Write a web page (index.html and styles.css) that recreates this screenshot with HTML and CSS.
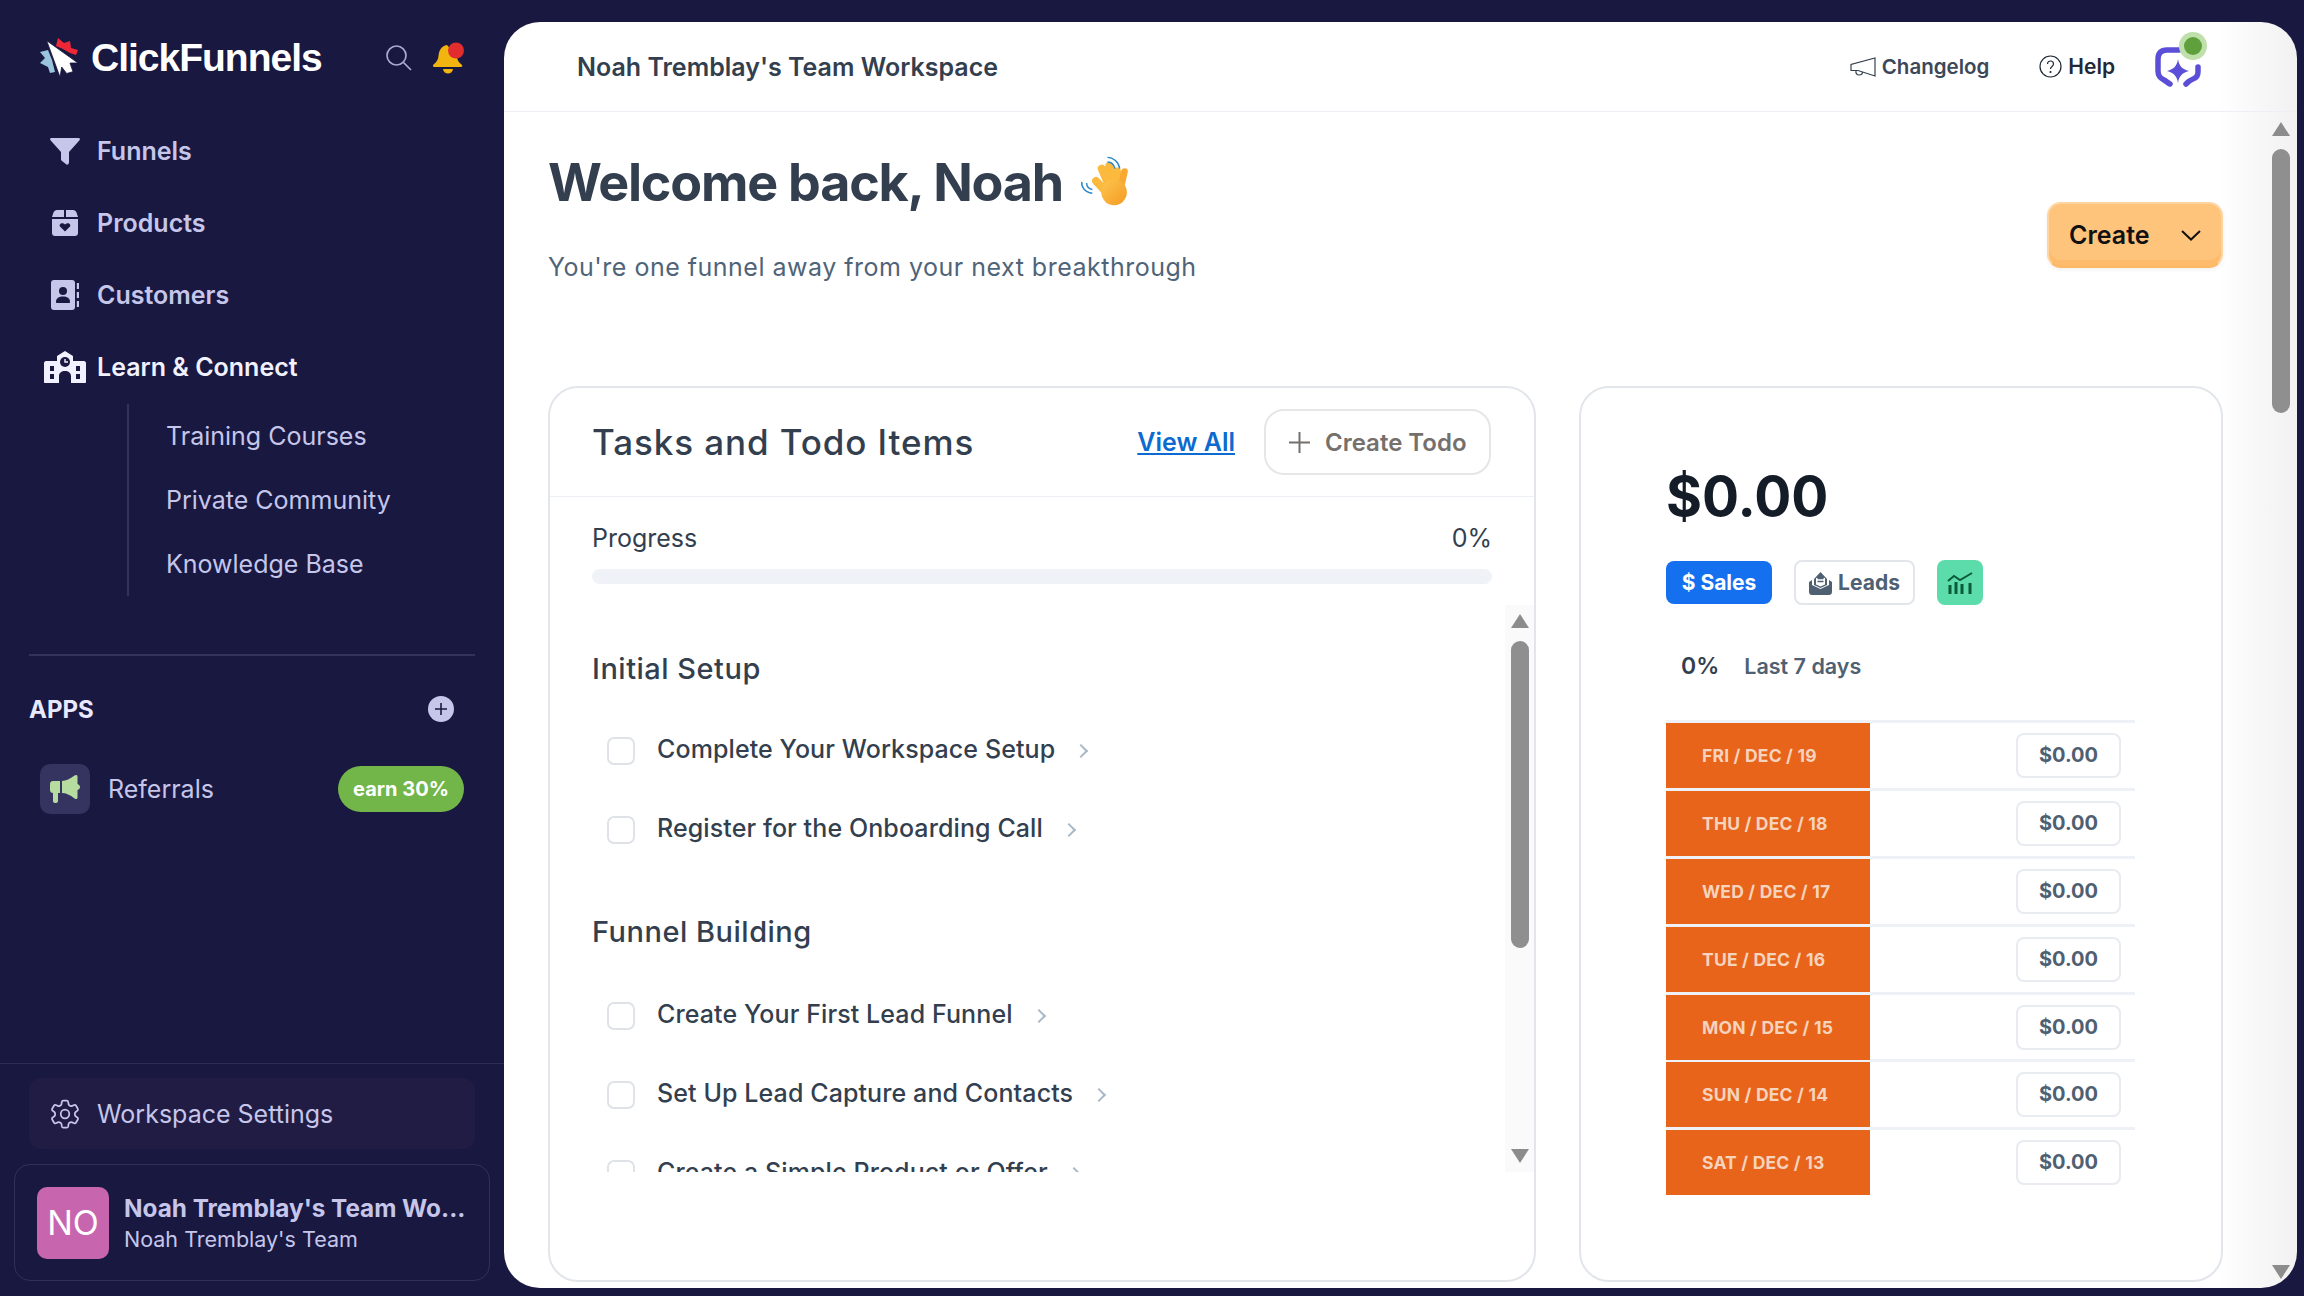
FILE: index.html
```html
<!DOCTYPE html>
<html>
<head>
	<meta charset="utf-8">
	<title>ClickFunnels</title>
	<link rel="stylesheet" href="styles.css">
</head>
<body>
	<div class="app">
		<aside class="sidebar">
			<div class="brand">
				<svg class="logo" viewBox="0 0 38 40">
					<path fill="#ee2737" d="M16 8 18 0 24 5 30 3 31 10 38 12 36 17 30 15 23 11Z"/>
					<path fill="#9cc3de" d="M0 14 8 12 12 22 15 34 10 35 8 29 0 25 5 20Z"/>
					<path fill="#fff" stroke="#191840" stroke-width=".8" d="M6.7 2.7 38 25 30 25 33 33.7 26.7 35.5 21.7 29 20 39Z"/>
				</svg>
				<span class="brand-name">ClickFunnels</span>
				<svg class="search-icon" viewBox="0 0 26 26" fill="none" stroke="#a9aad6" stroke-width="1.7"><circle cx="10.5" cy="10.5" r="9.5"/><path d="M17.5 17.5 25 25"/></svg>
				<svg class="bell-icon" viewBox="0 0 33 32">
					<path fill="#f2b50f" d="M15 3c-6 1-8 6-8.500 11-.4 4-2 6-5 8.500-1 1-.7 2.500 1 2.500h26c2 0 2.400-1.500 1-2.500-3-2.500-4-4-4.500-8Z"/>
					<path fill="#f2b50f" d="M11 27h10c-.5 3-2.500 4.500-5 4.500s-4.500-1.500-5-4.500Z"/>
					<circle cx="24" cy="8.500" r="8" fill="#e12d2d"/>
				</svg>
			</div>
			<nav class="nav">
				<a class="nav-item">
					<span class="nav-icon"><svg width="30" height="27" viewBox="0 0 30 27"><path fill="#c5c6ea" d="M1.500 0h27c1.200 0 1.800 1.200 1 2.200L19 14v10.500c0 1.500-1.500 2.800-2.500 2L12 23c-.8-.6-1-1.200-1-2v-7L.5 2.200C-.3 1.200.3 0 1.500 0Z"/></svg></span>
					Funnels
				</a>
				<a class="nav-item">
					<span class="nav-icon"><svg width="26" height="26" viewBox="0 0 26 26"><path fill="#c5c6ea" d="M5 0h7v7H0l1.500-4.500C2 1 3.500 0 5 0Zm9 0h7c1.500 0 3 1 3.500 2.500L26 7H14ZM0 9h26v14c0 1.700-1.300 3-3 3H3c-1.700 0-3-1.300-3-3Z"/><path fill="#191840" d="M13 21.500 8.200 16.800c-2-2.300 1.800-5.200 4.800-2.300 3-2.900 6.800 0 4.800 2.300Z"/></svg></span>
					Products
				</a>
				<a class="nav-item">
					<span class="nav-icon"><svg width="28" height="30" viewBox="0 0 28 30"><rect width="24" height="30" rx="3" fill="#c5c6ea"/><circle cx="12" cy="11" r="4" fill="#191840"/><path fill="#191840" d="M5 22c0-4 3-5.500 7-5.500s7 1.500 7 5.500c0 .7-.4 1-1 1H6c-.6 0-1-.3-1-1Z"/><path stroke="#c5c6ea" stroke-width="2.400" d="M27 3v6m0 3v6m0 3v6"/></svg></span>
					Customers
				</a>
				<a class="nav-item active">
					<span class="nav-icon"><svg width="42" height="32" viewBox="0 0 42 32"><path fill="#f1f1ff" d="M21 0 29 5v5h11c1 0 2 1 2 2v19c0 .6-.4 1-1 1H27v-7c0-3-2.500-5-6-5s-6 2-6 5v7H1c-.6 0-1-.4-1-1V12c0-1 1-2 2-2h11V5Z"/><circle cx="21" cy="11" r="5" fill="#191840"/><path stroke="#f1f1ff" stroke-width="1.400" fill="none" d="M21 8v3h3"/><path fill="#191840" d="M6 15h4v5H6zm0 8h4v5H6zm26-8h4v5h-4zm0 8h4v5h-4z"/></svg></span>
					Learn &amp; Connect
				</a>
			</nav>
			<ul class="subnav">
				<li>Training Courses</li>
				<li>Private Community</li>
				<li>Knowledge Base</li>
			</ul>
			<div class="divider"></div>
			<div class="apps-head">
				<span>APPS</span>
				<span class="apps-add"><svg width="12" height="12" viewBox="0 0 12 12"><path stroke="#191840" stroke-width="1.600" d="M6 0v12M0 6h12"/></svg></span>
			</div>
			<div class="referral">
				<span class="referral-icon"><svg width="30" height="28" viewBox="0 0 30 28"><path fill="#b7dca0" d="M26 0c1 0 1.500.7 1.500 1.500V9c1.500.5 2.500 1.500 2.500 3s-1 2.500-2.500 3v7.500c0 .8-.5 1.500-1.500 1.500-.5 0-1-.2-1.500-.6C20 20 16 18 12 18V6c4 0 8-2 12.500-5.400.5-.4 1-.6 1.500-.6ZM3 6h7v12H8v8c0 1-1 2-2 2H5c-1 0-2-1-2-2v-8c-1.700 0-3-1.300-3-3V9c0-1.700 1.300-3 3-3Z"/></svg></span>
				<span class="referral-name">Referrals</span>
				<span class="earn">earn 30%</span>
			</div>
			<div class="side-foot">
				<div class="settings">
					<span class="nav-icon"><svg width="32" height="32" viewBox="0 0 24 24" fill="none" stroke="#c5c6ea" stroke-width="1.300" stroke-linejoin="round"><path d="M9.600 2.900c.1-.5.500-.9 1.100-.9h2.600c.6 0 1 .4 1.100.9l.2 1.600c.1.500.4.900.8 1.100l.6.300c.4.200.9.200 1.400 0l1.500-.6c.5-.2 1.100 0 1.400.5l1.300 2.300c.3.500.2 1.100-.3 1.400l-1.300 1c-.4.300-.6.800-.6 1.300v.6c0 .5.200 1 .6 1.300l1.300 1c.5.300.6.900.3 1.400l-1.300 2.300c-.3.500-.9.700-1.400.5l-1.500-.6c-.5-.2-1-.2-1.400 0l-.6.300c-.4.200-.7.600-.8 1.100l-.2 1.600c-.1.500-.5.900-1.100.9h-2.600c-.6 0-1-.4-1.100-.9l-.2-1.600c-.1-.5-.4-.9-.8-1.100l-.6-.3c-.4-.2-.9-.2-1.400 0l-1.500.6c-.5.200-1.100 0-1.400-.5l-1.300-2.300c-.3-.5-.2-1.100.3-1.400l1.300-1c.4-.3.6-.8.600-1.300v-.6c0-.5-.2-1-.6-1.300l-1.300-1c-.5-.3-.6-.9-.3-1.400l1.300-2.300c.3-.5.900-.7 1.400-.5l1.500.6c.5.200 1 .2 1.400 0l.6-.3c.4-.2.700-.6.800-1.100Z"/><circle cx="12" cy="12" r="3.200"/></svg></span>
					Workspace Settings
				</div>
				<div class="account">
					<span class="avatar">NO</span>
					<div class="account-text">
						<div class="account-name">Noah Tremblay's Team Wo...</div>
						<div class="account-team">Noah Tremblay's Team</div>
					</div>
				</div>
			</div>
		</aside>

		<main class="panel">
			<header class="topbar">
				<span class="workspace">Noah Tremblay's Team Workspace</span>
				<div class="top-actions">
					<a class="top-link changelog">
						<svg width="26" height="20" viewBox="0 0 26 20" fill="none" stroke="#34404f" stroke-width="1.200"><path d="M25 1v18L8 13.500H1V7.500L25 1Z"/><path d="M6 13.500c-.5 3 1 4.500 3 4.500s3.500-1 3.500-3"/></svg>
						Changelog
					</a>
					<a class="top-link help">
						<svg width="23" height="23" viewBox="0 0 23 23" fill="none" stroke="#1f2937" stroke-width="1.200"><circle cx="11.500" cy="11.500" r="10.500"/><path d="M8.500 9c0-4 6-4 6 0 0 2.500-3 2.500-3 5"/><circle cx="11.500" cy="17" r=".5"/></svg>
						Help
					</a>
					<span class="ai-badge">
						<svg width="46" height="40" viewBox="0 0 46 40"><path fill="none" stroke="#5a4fd6" stroke-width="5.500" stroke-linecap="round" d="M24 3H12C6 3 3 6 3 12v12c0 5 2 7 6 9 2 1 4 3 6 4M43 20v5c0 4-2 6-5 7-3 1-5 3-7 5"/><path fill="#5a4fd6" d="M23 12c1 7 4 10 11 12-7 2-10 5-11 12-1-7-4-10-11-12 7-2 10-5 11-12Z"/></svg>
						<i class="ai-dot"></i>
					</span>
				</div>
			</header>
			<div class="page">
				<div class="page-content">
					<section class="hero">
						<div>
							<h1 class="welcome">Welcome back, Noah
								<svg class="wave" width="53" height="50" viewBox="0 0 56 52">
									<defs><linearGradient id="handFill" x1="0" y1="0" x2="1" y2="1"><stop offset="0" stop-color="#fcc64f"/><stop offset="1" stop-color="#f59a23"/></linearGradient></defs>
									<g fill="none" stroke-linecap="round">
										<path stroke="#fbb93e" stroke-width="8.500" d="M17 26 28 38M23 13 32 34M31 10 37 32M39 16 40 32"/>
										<path stroke="#f9a832" stroke-width="7" d="M47 16 43 34"/>
									</g>
									<circle cx="36" cy="38" r="13.500" fill="url(#handFill)"/>
									<path fill="none" stroke="#2c89c9" stroke-width="1.500" d="M2 27c-1 5 3 11 11 12M7 28c0 3 2 6 6 7M29 1c6 0 12 5 13 12M29 6c4 0 7 3 8 7"/>
								</svg>
							</h1>
							<p class="tagline">You're one funnel away from your next breakthrough</p>
						</div>
						<button class="create-btn">Create
							<svg width="20" height="11" viewBox="0 0 20 11" fill="none" stroke="#111" stroke-width="2"><path d="M1 1l9 8.500L19 1"/></svg>
						</button>
					</section>
					<section class="cards">
						<div class="card tasks">
							<div class="tasks-head">
								<h2>Tasks and Todo Items</h2>
								<a class="view-all">View All</a>
								<button class="create-todo"><svg width="21" height="21" viewBox="0 0 21 21"><path stroke="#75706c" stroke-width="2" d="M10.500 0v21M0 10.500h21"/></svg>Create Todo</button>
							</div>
							<div class="progress">
								<div class="progress-label"><span>Progress</span><span>0%</span></div>
								<div class="progress-bar"></div>
							</div>
							<div class="task-area">
								<div class="task-list">
									<h3>Initial Setup</h3>
									<div class="task"><i class="check"></i><span>Complete Your Workspace Setup</span><b class="chev"></b></div>
									<div class="task"><i class="check"></i><span>Register for the Onboarding Call</span><b class="chev"></b></div>
									<h3 class="later">Funnel Building</h3>
									<div class="task"><i class="check"></i><span>Create Your First Lead Funnel</span><b class="chev"></b></div>
									<div class="task"><i class="check"></i><span>Set Up Lead Capture and Contacts</span><b class="chev"></b></div>
									<div class="task"><i class="check"></i><span>Create a Simple Product or Offer</span><b class="chev"></b></div>
								</div>
								<div class="scroll scroll-tasks">
									<i class="scroll-up"></i>
									<i class="thumb thumb-tasks"></i>
									<i class="scroll-down"></i>
								</div>
							</div>
						</div>
						<div class="card sales">
							<div class="amount">$0.00</div>
							<div class="tabs">
								<span class="tab tab-sales">$ Sales</span>
								<span class="tab tab-leads"><svg width="23" height="24" viewBox="0 0 23 24"><path fill="#4f6072" d="M5 8 11.500 1 18 8v6l-6.500 3L5 14Z"/><path fill="#fff" d="M7 7h9v6.500l-4.500 2-4.500-2Z"/><path stroke="#4f6072" stroke-width="1.500" d="M8.500 7.500h6m-6 3h6"/><path fill="#4f6072" d="M0 11 3 9v5l8.500 4L20 14V9l3 2v10c0 1.700-1.300 3-3 3H3c-1.700 0-3-1.300-3-3Z"/></svg>Leads</span>
								<span class="tab-chart"><svg width="26" height="22" viewBox="0 0 26 22" fill="none" stroke="#0b5a3a"><path stroke-width="2" d="M1 9l6-5 6 4L25 1"/><path stroke-width="3" d="M3 13v9m6-12v12m6-10v12m8-13v13"/></svg></span>
							</div>
							<div class="stat"><span class="stat-pct">0%</span><span class="stat-range">Last 7 days</span></div>
							<div class="days">
								<div class="day"><span class="day-name">FRI / DEC / 19</span><span class="day-value">$0.00</span></div>
								<div class="day"><span class="day-name">THU / DEC / 18</span><span class="day-value">$0.00</span></div>
								<div class="day"><span class="day-name">WED / DEC / 17</span><span class="day-value">$0.00</span></div>
								<div class="day"><span class="day-name">TUE / DEC / 16</span><span class="day-value">$0.00</span></div>
								<div class="day"><span class="day-name">MON / DEC / 15</span><span class="day-value">$0.00</span></div>
								<div class="day"><span class="day-name">SUN / DEC / 14</span><span class="day-value">$0.00</span></div>
								<div class="day"><span class="day-name">SAT / DEC / 13</span><span class="day-value">$0.00</span></div>
							</div>
						</div>
					</section>
				</div>
				<div class="scroll scroll-page">
					<i class="scroll-up"></i>
					<i class="thumb thumb-page"></i>
					<i class="scroll-down"></i>
				</div>
			</div>
		</main>
	</div>
</body>
</html>
```

FILE: styles.css
```css
/* base */
* {
	box-sizing: border-box;
}

html, body {
	margin: 0;
	height: 100%;
	overflow: hidden;
}

body {
	background-color: #191840;
	font-family: Inter, "Open Sans", sans-serif;
	color: #1f2937;
}

.app {
	display: flex;
	height: 1296px;
}

h1, h2, h3, p, ul {
	margin: 0;
	padding: 0;
}

/* sidebar */
.sidebar {
	width: 504px;
	flex: none;
	display: flex;
	flex-direction: column;
	color: #c5c6ea;
}

.brand {
	display: flex;
	align-items: center;
	height: 40px;
	margin-top: 38px;
	padding: 0 39px 0 40px;
}

.logo {
	width: 38px;
	height: 40px;
}

.brand-name {
	margin-left: 13px;
	font-family: "Liberation Sans", sans-serif;
	font-size: 39px;
	font-weight: 700;
	letter-spacing: -1px;
	color: #fff;
}

.search-icon {
	width: 26px;
	height: 26px;
	margin-left: auto;
}

.bell-icon {
	width: 33px;
	height: 32px;
	margin-left: 20px;
}

.nav {
	margin-top: 37px;
}

.nav-item {
	display: flex;
	align-items: center;
	height: 72px;
	padding-left: 40px;
	font-size: 25px;
	font-weight: 600;
}

.nav-item.active {
	color: #f1f1ff;
}

.nav-icon {
	width: 50px;
	margin-right: 7px;
	display: flex;
	justify-content: center;
	flex: none;
}

.subnav {
	list-style: none;
	margin: 1px 0 0 127px;
	border-left: 2px solid #32325a;
	padding-left: 37px;
	font-size: 25px;
}

.subnav li {
	height: 64px;
	line-height: 64px;
}

.divider {
	height: 2px;
	margin: 58px 29px 0;
	background-color: #32325a;
}

.apps-head {
	display: flex;
	justify-content: space-between;
	align-items: center;
	height: 30px;
	margin-top: 38px;
	padding: 0 50px 0 29px;
	font-size: 24px;
	font-weight: 700;
	color: #e8e8ff;
}

.apps-add {
	width: 26px;
	height: 26px;
	border-radius: 50%;
	background-color: #c5c6ea;
	display: flex;
	align-items: center;
	justify-content: center;
}

.referral {
	display: flex;
	align-items: center;
	margin: 40px 40px 0;
	font-size: 25px;
}

.referral-icon {
	width: 50px;
	height: 50px;
	border-radius: 10px;
	background-color: #35335f;
	display: flex;
	align-items: center;
	justify-content: center;
}

.referral-name {
	margin-left: 18px;
}

.earn {
	margin-left: auto;
	width: 126px;
	height: 46px;
	line-height: 46px;
	text-align: center;
	border-radius: 23px;
	background-color: #72b548;
	color: #fff;
	font-size: 20px;
	font-weight: 700;
}

.side-foot {
	margin-top: auto;
	border-top: 1px solid #2e2d58;
	padding: 14px 14px 15px;
}

.settings {
	display: flex;
	align-items: center;
	height: 71px;
	margin: 0 15px;
	padding-left: 11px;
	border-radius: 12px;
	background-color: #201c44;
	font-size: 25px;
}

.account {
	display: flex;
	align-items: center;
	height: 117px;
	margin-top: 15px;
	padding: 0 10px 0 22px;
	border: 1px solid #30305a;
	border-radius: 16px;
}

.avatar {
	width: 72px;
	height: 72px;
	flex: none;
	border-radius: 10px;
	background-color: #c765ae;
	color: #fff;
	font-size: 34px;
	line-height: 72px;
	text-align: center;
}

.account-text {
	min-width: 0;
	margin-left: 15px;
}

.account-name {
	font-size: 24.300px;
	font-weight: 700;
	white-space: nowrap;
}

.account-team {
	margin-top: 3px;
	font-size: 21.500px;
}

/* panel */
.panel {
	flex: 1;
	height: 1266px;
	margin: 22px 7px 8px 0;
	border-radius: 36px;
	overflow: hidden;
	display: flex;
	flex-direction: column;
	background: linear-gradient(90deg, #fff calc(100% - 80px), #f1f1f1);
}

.topbar {
	display: flex;
	align-items: center;
	justify-content: space-between;
	flex: none;
	height: 90px;
	padding: 0 96px 0 73px;
	border-bottom: 1px solid #eceff3;
}

.workspace {
	font-size: 25px;
	font-weight: 600;
	color: #333f4f;
}

.top-actions {
	display: flex;
	align-items: center;
}

.top-link {
	display: flex;
	align-items: center;
	gap: 6px;
	font-size: 21px;
	font-weight: 600;
}

.changelog {
	color: #3c4858;
	font-size: 20.500px;
}

.help {
	margin-left: 50px;
}

.ai-badge {
	position: relative;
	margin-left: 40px;
	width: 46px;
	height: 40px;
}

.ai-dot {
	position: absolute;
	left: 29px;
	top: -10px;
	width: 18px;
	height: 18px;
	border-radius: 50%;
	background-color: #5f9f3c;
	box-shadow: 0 0 0 5px #bfe0ab;
}

.page {
	flex: 1;
	min-height: 0;
	display: flex;
}

.page-content {
	width: 1719px;
	flex: none;
	padding-left: 44px;
}

.hero {
	display: flex;
	justify-content: space-between;
	height: 274px;
}

.welcome {
	display: flex;
	align-items: center;
	height: 64px;
	margin-top: 38px;
	font-size: 52px;
	font-weight: 700;
	letter-spacing: -1.200px;
	color: #333f4f;
}

.wave {
	margin-left: 17px;
	margin-top: -2px;
}

.tagline {
	margin-top: 38px;
	font-size: 25px;
	letter-spacing: 0.500px;
	line-height: 30px;
	color: #4f6478;
}

.create-btn {
	display: flex;
	align-items: center;
	justify-content: space-between;
	width: 176px;
	height: 66px;
	margin-top: 90px;
	padding: 0 20px;
	font: 600 25px Inter, sans-serif;
	color: #111;
	background-color: #fec47c;
	border: 2px solid #ffd4a0;
	border-bottom-color: #fdb863;
	border-radius: 14px;
	box-shadow: inset 0 -6px 0 #fdbb6b, 0 2px 4px rgba(0,0,0,0.05);
}

.cards {
	display: flex;
	gap: 43px;
	height: 896px;
}

.card {
	border: 2px solid #e2e6ea;
	border-radius: 30px;
	background-color: #fff;
}

/* tasks */
.tasks {
	width: 988px;
	display: flex;
	flex-direction: column;
	overflow: hidden;
}

.tasks-head {
	display: flex;
	align-items: center;
	flex: none;
	height: 109px;
	padding: 0 43px 0 42px;
	border-bottom: 1px solid #eceff3;
}

.tasks-head h2 {
	font-size: 35px;
	font-weight: 500;
	letter-spacing: 0.900px;
	color: #333f4f;
	margin-right: auto;
}

.view-all {
	font-size: 25px;
	font-weight: 600;
	color: #0c6ad0;
	text-decoration: underline;
}

.create-todo {
	display: flex;
	align-items: center;
	gap: 15px;
	width: 227px;
	height: 66px;
	margin-left: 29px;
	padding: 0 0 0 23px;
	background-color: #fff;
	border: 2px solid #e5e6e8;
	border-radius: 20px;
	font: 600 24px Inter, sans-serif;
	color: #75706c;
}

.progress {
	flex: none;
	padding: 26px 42px 0;
}

.progress-label {
	display: flex;
	justify-content: space-between;
	font-size: 25px;
	line-height: 30px;
	color: #333f4f;
}

.progress-bar {
	height: 15px;
	margin-top: 16px;
	border-radius: 8px;
	background-color: #eff2f7;
}

.task-area {
	display: flex;
	height: 567px;
	margin-top: 21px;
	flex: none;
}

.task-list {
	flex: 1;
	overflow: hidden;
	padding: 46px 0 0 42px;
}

.task-list h3 {
	font-size: 29px;
	font-weight: 500;
	letter-spacing: 0.500px;
	line-height: 36px;
	color: #333f4f;
	margin-bottom: 24px;
}

.task-list h3.later {
	margin-top: 45px;
	margin-bottom: 26px;
}

.task {
	display: flex;
	align-items: center;
	height: 79px;
	padding-left: 15px;
	font-size: 25px;
	font-weight: 500;
	letter-spacing: 0.100px;
	color: #333f4f;
}

.task span {
	padding-bottom: 4px;
}

.check {
	width: 28px;
	height: 28px;
	margin-right: 22px;
	border: 2px solid #dfe3e8;
	border-radius: 7px;
}

.chev {
	width: 10px;
	height: 10px;
	margin-left: 21px;
	border-top: 2px solid #a9b8c6;
	border-right: 2px solid #a9b8c6;
	transform: rotate(45deg);
}

/* scrollbars */
.scroll {
	display: flex;
	flex-direction: column;
	align-items: center;
	flex: none;
}

.scroll-up,
.scroll-down {
	width: 0;
	height: 0;
	border-left: 9px solid transparent;
	border-right: 9px solid transparent;
}

.scroll-up {
	border-bottom: 14px solid #8c8c8c;
}

.scroll-down {
	margin-top: auto;
	border-top: 14px solid #8c8c8c;
}

.thumb {
	width: 18px;
	margin-top: 13px;
	border-radius: 9px;
	background-color: #8f8f8f;
}

.scroll-tasks {
	width: 29px;
	padding: 9px 0;
	background-color: #fafafa;
}

.thumb-tasks {
	height: 307px;
}

.scroll-page {
	width: 18px;
	margin-left: 49px;
	padding: 10px 0 9px;
}

.thumb-page {
	height: 264px;
}

/* sales card */
.sales {
	width: 644px;
	padding: 78px 0 0 85px;
}

.amount {
	font-size: 55px;
	font-weight: 700;
	line-height: 60px;
	color: #141c28;
}

.tabs {
	display: flex;
	align-items: center;
	gap: 22px;
	margin-top: 34px;
	height: 45px;
}

.tab {
	display: flex;
	align-items: center;
	justify-content: center;
	height: 45px;
	border-radius: 8px;
	font-size: 21px;
	font-weight: 700;
}

.tab-sales {
	width: 106px;
	height: 43px;
	background-color: #1570ef;
	color: #fff;
}

.tab-leads {
	width: 121px;
	gap: 6px;
	border: 2px solid #e2e6ea;
	color: #4f6072;
}

.tab-chart {
	width: 46px;
	height: 45px;
	border-radius: 8px;
	background-color: #5cdcaa;
	display: flex;
	align-items: center;
	justify-content: center;
}

.stat {
	display: flex;
	align-items: center;
	height: 30px;
	margin-top: 46px;
	padding-left: 15px;
}

.stat-pct {
	font-size: 23px;
	font-weight: 600;
	color: #333f4f;
}

.stat-range {
	margin-left: 25px;
	font-size: 21.500px;
	font-weight: 600;
	color: #4f6072;
}

.days {
	width: 469px;
	margin-top: 39px;
}

.day {
	display: flex;
	align-items: center;
	height: 67.900px;
	border-top: 3px solid #eef1f5;
}

.day-name {
	width: 204px;
	height: 65px;
	line-height: 65px;
	padding-left: 36px;
	background-color: #e8641b;
	color: #f6d3bd;
	font-size: 17.500px;
	font-weight: 700;
	letter-spacing: 0.200px;
}

.day-value {
	width: 105px;
	height: 45px;
	line-height: 41px;
	margin: 0 14px 0 auto;
	text-align: center;
	border: 2px solid #e8ebef;
	border-radius: 8px;
	font-size: 20px;
	font-weight: 700;
	color: #4f6072;
}
```
